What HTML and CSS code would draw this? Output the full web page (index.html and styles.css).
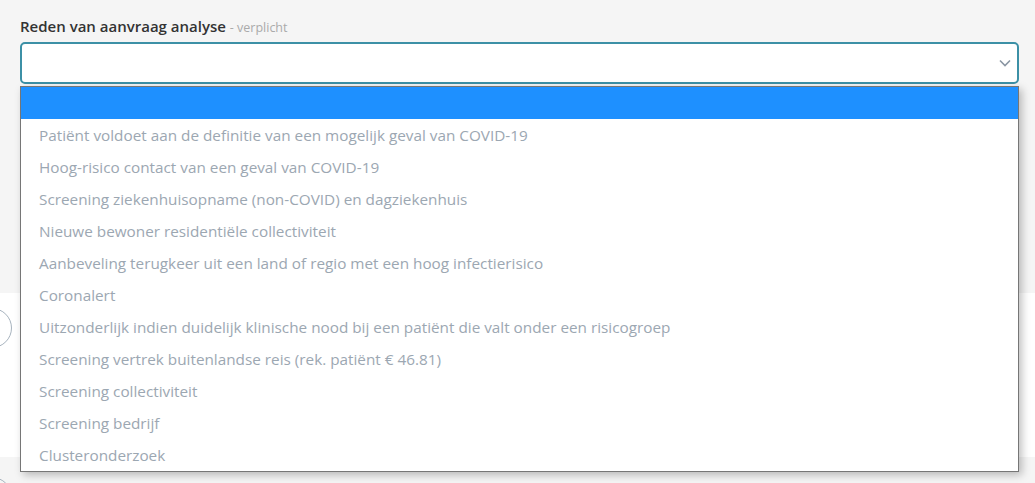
FILE: index.html
```html
<!DOCTYPE html>
<html lang="nl">
<head>
    <meta charset="UTF-8">
    <title>Aanvraag analyse</title>
    <link rel="stylesheet" href="styles.css">
</head>
<body>
    <div class="top">
        <div class="field">
            <label class="field-label">Reden van aanvraag analyse <span class="hint">- verplicht</span></label>
            <div class="select">
                <svg class="chevron" width="12" height="8" viewBox="0 0 12 8">
                    <path d="M1 1.5 L6 6.5 L11 1.5" fill="none" stroke="#8a96a3" stroke-width="1.6"/>
                </svg>
            </div>

            <!-- open option list -->
            <ul class="options">
                <li class="selected">&nbsp;</li>
                <li>Patiënt voldoet aan de definitie van een mogelijk geval van COVID-19</li>
                <li>Hoog-risico contact van een geval van COVID-19</li>
                <li>Screening ziekenhuisopname (non-COVID) en dagziekenhuis</li>
                <li>Nieuwe bewoner residentiële collectiviteit</li>
                <li>Aanbeveling terugkeer uit een land of regio met een hoog infectierisico</li>
                <li>Coronalert</li>
                <li>Uitzonderlijk indien duidelijk klinische nood bij een patiënt die valt onder een risicogroep</li>
                <li>Screening vertrek buitenlandse reis (rek. patiënt € 46.81)</li>
                <li>Screening collectiviteit</li>
                <li>Screening bedrijf</li>
                <li>Clusteronderzoek</li>
            </ul>
        </div>
    </div>

    <div class="card">
        <div class="row">
            <span class="radio"></span>
            <span class="row-text">c</span>
        </div>
    </div>

    <div class="bottom">
        <span class="radio"></span>
    </div>
</body>
</html>
```

FILE: styles.css
```css
html, body {
    overflow: hidden;
}

body {
    margin: 0;
    padding: 0;
    background-color: #f5f5f5;
    font-family: "Open Sans", "Liberation Sans", sans-serif;
    color: #333;
    height: 483px;
}

.top {
    height: 293px;
    padding: 0 16px 0 20px;
}

.field {
    position: relative;
    padding-top: 16px;
}

.field-label {
    display: block;
    height: 20px;
    font-size: 15px;
    font-weight: 600;
    line-height: 20px;
    color: #333;
    margin-bottom: 6px;
}

.hint {
    font-size: 12.5px;
    font-weight: 400;
    line-height: 1;
    color: #aaa;
}

.select {
    height: 38px;
    border: 2px solid #3c90a6;
    border-radius: 5px;
    background-color: #fff;
    display: flex;
    align-items: center;
    justify-content: flex-end;
    padding-right: 6px;
}

.chevron {
    display: block;
}

.options {
    position: absolute;
    top: 100%;
    left: 0;
    right: 0;
    margin: 2px 0 0 0;
    padding: 0;
    list-style: none;
    background-color: #fff;
    border: 1px solid #767676;
    box-shadow: 3px 3px 8px rgba(0, 0, 0, 0.25);
    z-index: 10;
}

.options li {
    height: 32px;
    line-height: 32px;
    padding-left: 18px;
    font-size: 15.3px;
    color: #9ca7b2;
    white-space: nowrap;
}

.options li.selected {
    background-color: #1e90ff;
}

.card {
    height: 164px;
    background-color: #fff;
}

.row {
    display: flex;
    align-items: center;
    padding-top: 15px;
}

.radio {
    display: block;
    width: 38px;
    height: 38px;
    border: 1px solid #a7b3be;
    border-radius: 50%;
    margin-left: -28px;
    flex-shrink: 0;
}

.row-text {
    margin-left: 8px;
    color: #e0a070;
    font-size: 14px;
}

.bottom {
    height: 26px;
    padding-top: 20px;
    overflow: hidden;
}
```
